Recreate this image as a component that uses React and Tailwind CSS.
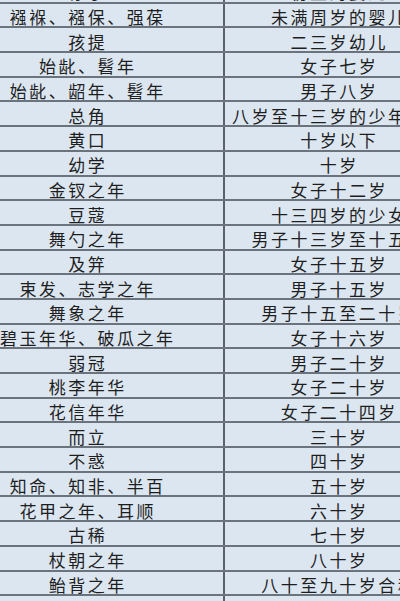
import React from "react";

const rows = [
  ["赤子", "初生的婴儿"],
  ["襁褓、襁保、强葆", "未满周岁的婴儿"],
  ["孩提", "二三岁幼儿"],
  ["始龀、髫年", "女子七岁"],
  ["始龀、龆年、髫年", "男子八岁"],
  ["总角", "八岁至十三岁的少年儿童"],
  ["黄口", "十岁以下"],
  ["幼学", "十岁"],
  ["金钗之年", "女子十二岁"],
  ["豆蔻", "十三四岁的少女"],
  ["舞勺之年", "男子十三岁至十五岁"],
  ["及笄", "女子十五岁"],
  ["束发、志学之年", "男子十五岁"],
  ["舞象之年", "男子十五至二十岁"],
  ["碧玉年华、破瓜之年", "女子十六岁"],
  ["弱冠", "男子二十岁"],
  ["桃李年华", "女子二十岁"],
  ["花信年华", "女子二十四岁"],
  ["而立", "三十岁"],
  ["不惑", "四十岁"],
  ["知命、知非、半百", "五十岁"],
  ["花甲之年、耳顺", "六十岁"],
  ["古稀", "七十岁"],
  ["杖朝之年", "八十岁"],
  ["鲐背之年", "八十至九十岁合称"],
  ["期颐", "一百岁"],
];

export default function App() {
  return (
    <div
      className="w-[400px] h-[601px] overflow-hidden bg-[#dce6f1] text-[#1e1e1e]"
      style={{ fontFamily: '"Noto Sans CJK SC", "Noto Sans", sans-serif' }}
    >
      <div className="mt-[-21px] ml-[-50px] w-[520px]">
        {rows.map(([a, b], i) => (
          <div
            key={i}
            className="flex h-[24.7px] border-b-2 border-[#6b737c] text-[17px] leading-none tracking-[2.5px]"
          >
            <div className="w-[275px] shrink-0 border-r-2 border-[#59616a] flex items-center justify-center pt-[3px] pl-[2.5px] whitespace-nowrap">
              {a}
            </div>
            <div className="w-[226px] shrink-0 flex items-center justify-center pt-[3px] pl-[2.5px] whitespace-nowrap">
              {b}
            </div>
          </div>
        ))}
      </div>
    </div>
  );
}
